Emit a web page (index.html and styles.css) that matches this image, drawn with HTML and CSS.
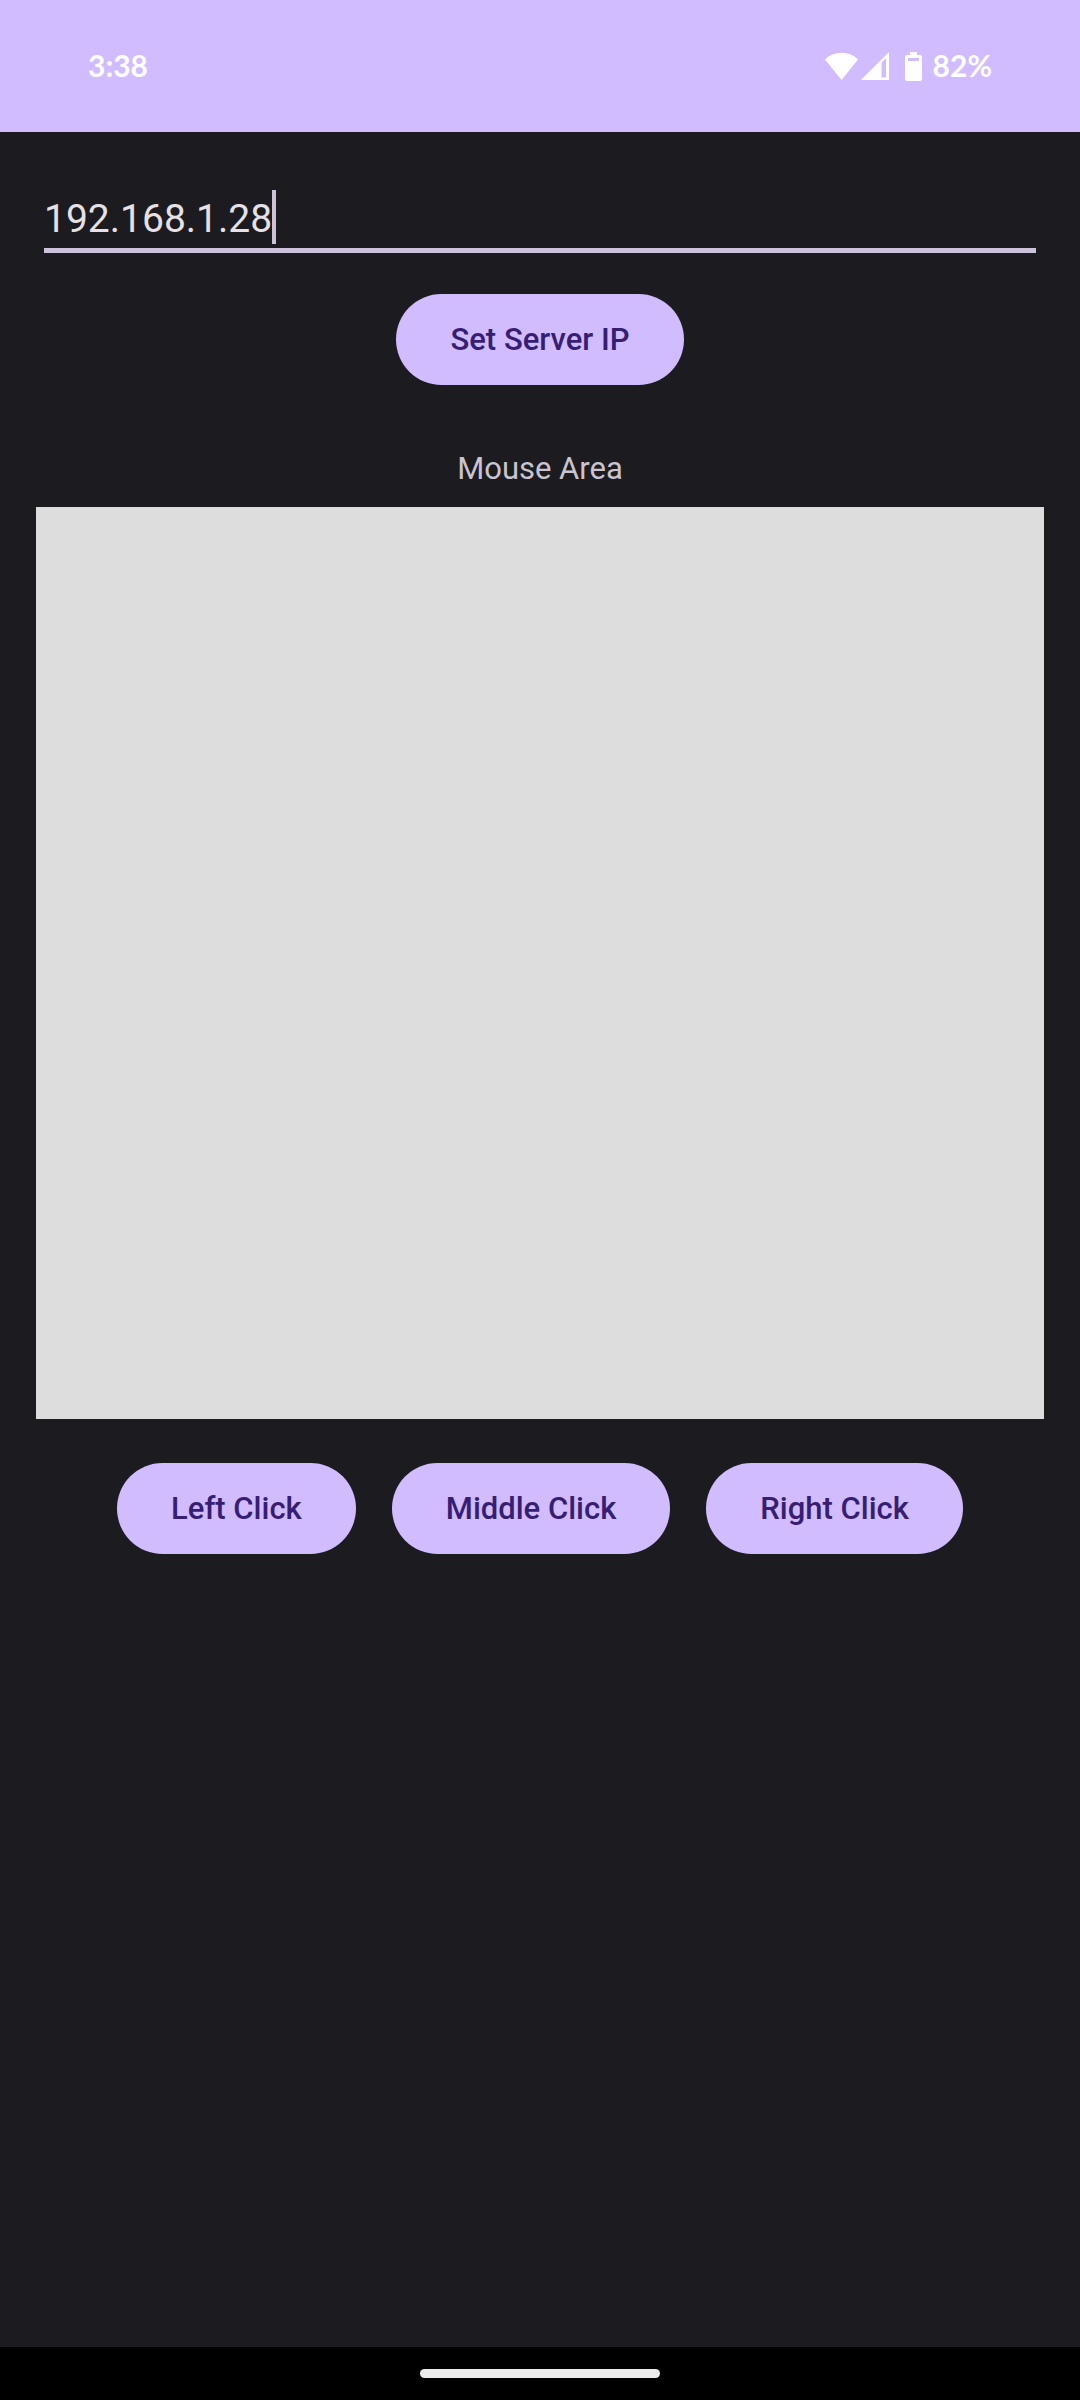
FILE: index.html
```html
<!DOCTYPE html>
<html lang="en">
<head>
  <meta charset="utf-8">
  <meta name="viewport" content="width=device-width, initial-scale=1">
  <title>Remote Mouse</title>
  <link rel="stylesheet" href="styles.css">
</head>
<body class="screen">
  <header class="status-bar">
    <time class="status-text">3:38</time>
    <div class="status-icons">
      <svg class="wifi" width="33" height="28" viewBox="0 0 33 28" aria-hidden="true">
        <path fill="#fff" d="M0 7.5C4.500 3 10 .7 16.500.7S28.500 3 33 7.500L16.500 28z"/>
      </svg>
      <svg class="signal" width="28" height="28" viewBox="0 0 28 28" aria-hidden="true">
        <path fill="#fff" fill-rule="evenodd" d="M28 0V28H0zM20.500 10.500V25.500H25V6.500z"/>
      </svg>
      <svg class="battery" width="17" height="29" viewBox="0 0 17 29" aria-hidden="true">
        <path fill="#fff" fill-rule="evenodd" d="M5 0H12V3H15Q17 3 17 5V27Q17 29 15 29H2Q0 29 0 27V5Q0 3 2 3H5zM3 6V9H14V6z"/>
      </svg>
      <span class="status-text">82%</span>
    </div>
  </header>

  <main class="content">
    <label class="ip-field">
      <input class="ip-input" type="text" value="192.168.1.28" size="12" aria-label="Server IP" spellcheck="false">
      <span class="caret"></span>
    </label>
    <button class="button" type="button">Set Server IP</button>
    <h1 class="area-title" id="area-title">Mouse Area</h1>
    <section class="mouse-area" aria-labelledby="area-title"></section>
    <div class="click-row">
      <button class="button" type="button">Left Click</button>
      <button class="button" type="button">Middle Click</button>
      <button class="button" type="button">Right Click</button>
    </div>
  </main>

  <footer class="nav-bar">
    <div class="nav-handle"></div>
  </footer>
</body>
</html>
```
FILE: styles.css
```css
* {
  box-sizing: border-box;
}

.screen {
  display: flex;
  flex-direction: column;
  min-height: 100vh;
  margin: 0;
  background: #1c1b1f;
  color: #cac4d0;
  font-family: Roboto, "Liberation Sans", sans-serif;
}

.status-bar {
  display: flex;
  justify-content: space-between;
  align-items: center;
  height: 132px;
  padding: 0 88px;
  background: #d0bcff;
  color: #fff;
}

.status-text {
  padding-bottom: 2px;
  font-family: Lato, sans-serif;
  font-size: 30px;
  font-weight: 700;
  line-height: 36px;
}

.status-icons {
  display: flex;
  align-items: center;
}

.signal {
  margin-left: 3px;
}

.battery {
  margin: 0 11px 0 16px;
}

.content {
  display: flex;
  flex: 1;
  flex-direction: column;
  align-items: center;
  padding: 58px 36px 36px;
}

.ip-field {
  display: flex;
  align-self: stretch;
  height: 63px;
  margin: 0 8px 41px;
  border-bottom: 5px solid #ccc2dc;
}

.ip-input {
  field-sizing: content;
  height: 54px;
  padding: 4px 0 0;
  border: 0;
  outline: 0;
  background: transparent;
  color: #e6e1e5;
  font: 400 39px/50px Roboto, "Liberation Sans", sans-serif;
}

.caret {
  width: 4px;
  height: 54px;
  background: #ccc2dc;
}

.button {
  height: 91px;
  padding: 0 54px;
  border: 0;
  border-radius: 46px;
  background: #d0bcff;
  color: #381e72;
  font: 500 31px/40px Roboto, "Liberation Sans", sans-serif;
}

.area-title {
  margin: 64px 0 18px;
  font-size: 31px;
  font-weight: 400;
  line-height: 40px;
}

.mouse-area {
  align-self: stretch;
  height: 38vh;
  background: #ddd;
}

.click-row {
  display: flex;
  justify-content: center;
  gap: 36px;
  margin-top: 44px;
}

.nav-bar {
  display: flex;
  justify-content: center;
  align-items: center;
  height: 53px;
  background: #000;
}

.nav-handle {
  width: 240px;
  height: 9px;
  border-radius: 5px;
  background: #ececec;
}
```
